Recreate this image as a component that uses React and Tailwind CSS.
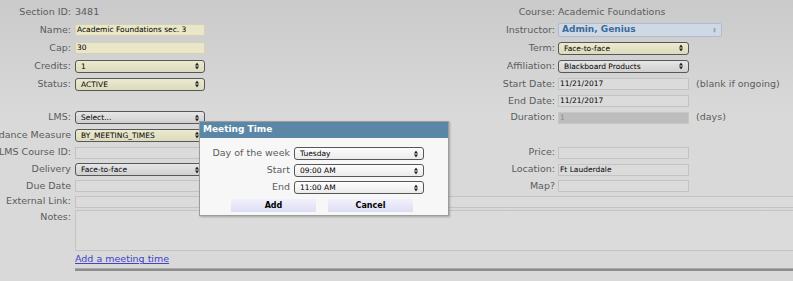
import React from 'react';

// little up/down arrows of a mac style select
const Arrows = ({ color = '#222', small = false }) => (
  <svg
    width={small ? 3 : 4}
    height={small ? 6 : 7}
    viewBox="0 0 4 7"
    className="absolute right-[5px] top-1/2 -translate-y-1/2"
  >
    <path d="M0 3L2 0L4 3Z" fill={color} />
    <path d="M0 4L2 7L4 4Z" fill={color} />
  </svg>
);

const Label = ({ children, className = 'pr-[4px]' }) => (
  <div className={`flex items-center justify-end whitespace-nowrap ${className}`}>{children}</div>
);

const Cell = ({ children, className = '' }) => (
  <div className={`flex items-center whitespace-nowrap ${className}`}>{children}</div>
);

const Select = ({ value, tone = 'gray', width = 'w-[130px]' }) => {
  const fill =
    tone === 'yellow'
      ? 'bg-linear-to-b from-[#eceacf] to-[#dddbbd]'
      : tone === 'white'
      ? 'bg-linear-to-b from-[#fdfdfd] to-[#ebebeb]'
      : 'bg-linear-to-b from-[#e6e6e6] to-[#d0d0d0]';
  return (
    <div
      className={`relative h-[13px] ${width} rounded-[3px] border border-[#575757] ${fill} pl-[5px] text-[7.5px] leading-[11px] text-black`}
    >
      {value}
      <Arrows />
    </div>
  );
};

const Input = ({ value = '', tone = 'plain', width = 'w-[130px]' }) => {
  const fill =
    tone === 'yellow'
      ? 'bg-[#e9e7c8] border-[#d4d1b4] text-black'
      : tone === 'dim'
      ? 'bg-[#bdbdbd] border-[#c6c6c6] text-[#8a8a8a]'
      : 'bg-[#dbdbdb] border-[#c3c3c3] text-black';
  return (
    <div className={`h-[12px] ${width} border ${fill} pl-[1px] text-[7.5px] leading-[10px]`}>
      {value}
    </div>
  );
};

const Instructor = () => (
  <div className="relative flex h-[14px] w-[164px] items-center rounded-[2px] border border-[#adbdcd] bg-[#cfd9e5] pl-[3px] text-[9px] font-bold text-[#3a6b9c]">
    Admin, Genius
    <Arrows color="#8a9cb0" small />
  </div>
);

const MeetingDialog = () => (
  <div className="absolute left-[199px] top-[121px] h-[95px] w-[250px] border border-[#9c9c9c] bg-[#f7f7f7] shadow-[1px_1px_2px_rgba(0,0,0,0.25)]">
    <div className="flex h-[16px] items-center bg-[#5b87a7] pl-[3px] text-[9px] font-bold text-white">
      Meeting Time
    </div>
    <div className="grid auto-rows-[17px] grid-cols-[90px_130px] gap-x-[4px] pt-[7px] text-[9.5px] text-[#5c5c5c]">
      <Label className="">Day of the week</Label>
      <Cell><Select value="Tuesday" tone="white" /></Cell>
      <Label className="">Start</Label>
      <Cell><Select value="09:00 AM" tone="white" /></Cell>
      <Label className="">End</Label>
      <Cell><Select value="11:00 AM" tone="white" /></Cell>
    </div>
    <div className="mt-[3px] flex gap-[12px] pl-[31px]">
      <button className="h-[13px] w-[85px] bg-linear-to-b from-[#f1f1fd] to-[#dedef4] text-[8px] leading-[13px] font-bold text-black">
        Add
      </button>
      <button className="h-[13px] w-[85px] bg-linear-to-b from-[#f1f1fd] to-[#dedef4] text-[8px] leading-[13px] font-bold text-black">
        Cancel
      </button>
    </div>
  </div>
);

export default function App() {
  return (
    <div className="relative h-[281px] w-[793px] overflow-hidden bg-linear-to-b from-[#cacaca] to-[#d9d9d9] to-40% font-['DejaVu_Sans',sans-serif] text-[9.5px] text-[#5c5c5c]">
      <div className="grid w-[818px] grid-cols-[75px_380px_103px_260px] grid-rows-[17px_18px_18px_18px_18px_16px_17px_18px_17px_17px_16px_15px_43px] pt-[4px]">
        {/* row 1 */}
        <Label>Section ID:</Label>
        <Cell>3481</Cell>
        <Label className="pr-[3px]">Course:</Label>
        <Cell>Academic Foundations</Cell>

        {/* row 2 */}
        <Label>Name:</Label>
        <Cell><Input value="Academic Foundations sec. 3" tone="yellow" /></Cell>
        <Label className="pr-[3px]">Instructor:</Label>
        <Cell><Instructor /></Cell>

        {/* row 3 */}
        <Label>Cap:</Label>
        <Cell><Input value="30" tone="yellow" /></Cell>
        <Label className="pr-[3px]">Term:</Label>
        <Cell><Select value="Face-to-face" tone="yellow" width="w-[131px]" /></Cell>

        {/* row 4 */}
        <Label>Credits:</Label>
        <Cell><Select value="1" tone="yellow" /></Cell>
        <Label className="pr-[3px]">Affiliation:</Label>
        <Cell><Select value="Blackboard Products" width="w-[131px]" /></Cell>

        {/* row 5 */}
        <Label>Status:</Label>
        <Cell><Select value="ACTIVE" tone="yellow" /></Cell>
        <Label className="pr-[3px]">Start Date:</Label>
        <Cell className="gap-[7px]">
          <Input value="11/21/2017" width="w-[131px]" />
          <span>(blank if ongoing)</span>
        </Cell>

        {/* row 6 */}
        <div />
        <div />
        <Label className="pr-[3px]">End Date:</Label>
        <Cell><Input value="11/21/2017" width="w-[131px]" /></Cell>

        {/* row 7 */}
        <Label>LMS:</Label>
        <Cell><Select value="Select..." /></Cell>
        <Label className="pr-[3px]">Duration:</Label>
        <Cell className="gap-[7px]">
          <Input value="1" tone="dim" width="w-[131px]" />
          <span>(days)</span>
        </Cell>

        {/* row 8 */}
        <Label>Attendance Measure</Label>
        <Cell><Select value="BY_MEETING_TIMES" tone="yellow" /></Cell>
        <div />
        <div />

        {/* row 9 */}
        <Label>LMS Course ID:</Label>
        <Cell><Input /></Cell>
        <Label className="pr-[3px]">Price:</Label>
        <Cell><Input width="w-[131px]" /></Cell>

        {/* row 10 */}
        <Label>Delivery</Label>
        <Cell><Select value="Face-to-face" /></Cell>
        <Label className="pr-[3px]">Location:</Label>
        <Cell><Input value="Ft Lauderdale" width="w-[131px]" /></Cell>

        {/* row 11 */}
        <Label>Due Date</Label>
        <Cell><Input /></Cell>
        <Label className="pr-[3px]">Map?</Label>
        <Cell><Input width="w-[131px]" /></Cell>

        {/* row 12 */}
        <Label>External Link:</Label>
        <Cell className="col-span-3"><Input width="w-full" /></Cell>

        {/* row 13 */}
        <div className="flex justify-end pr-[4px] pt-[1px]">Notes:</div>
        <div className="col-span-3 pt-[1px]">
          <div className="h-[41px] w-full border border-[#c3c3c3] bg-[#dbdbdb]" />
        </div>
      </div>

      <div className="flex h-[15px] items-center pl-[75px]">
        <a href="#" className="text-[#4343c9] underline">Add a meeting time</a>
      </div>
      <div className="ml-[75px] mt-[1px] h-[3px] border-t border-[#a8a8a8] bg-[#8c8c8c]" />

      <MeetingDialog />
    </div>
  );
}
